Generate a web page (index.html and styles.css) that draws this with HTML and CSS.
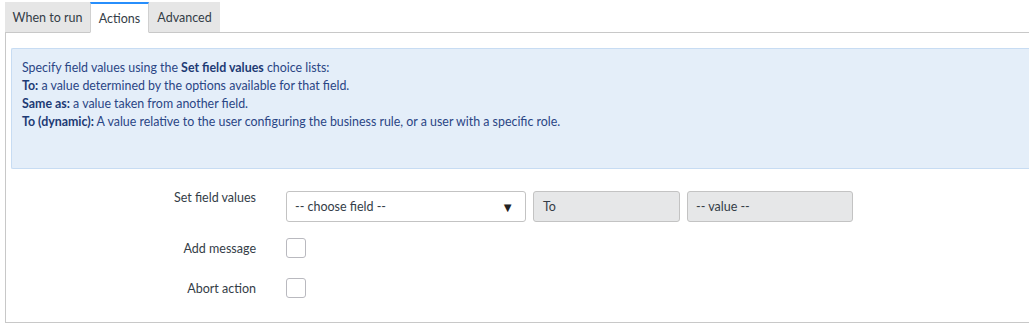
FILE: index.html
```html
<!DOCTYPE html>
<html>
<head>
<meta charset="utf-8">
<link rel="stylesheet" href="styles.css">
</head>
<body>
<div class="page">
  <div class="tabs">
    <div class="tab">When to run</div>
    <div class="tab active">Actions</div>
    <div class="tab">Advanced</div>
    <div class="tab-rest"></div>
  </div>
  <div class="panel">
    <div class="info">
      <div class="line">Specify field values using the <b>Set field values</b> choice lists:</div>
      <div class="line"><b>To:</b> a value determined by the options available for that field.</div>
      <div class="line"><b>Same as:</b> a value taken from another field.</div>
      <div class="line"><b>To (dynamic):</b> A value relative to the user configuring the business rule, or a user with a specific role.</div>
    </div>
    <div class="form">
      <div class="row row-fields">
        <div class="label">Set field values</div>
        <div class="controls">
          <div class="select"><span>-- choose field --</span><span class="arrow">&#9660;</span></div>
          <div class="box box-to">To</div>
          <div class="box box-value">-- value --</div>
        </div>
      </div>
      <div class="row">
        <div class="label">Add message</div>
        <div class="check"></div>
      </div>
      <div class="row">
        <div class="label">Abort action</div>
        <div class="check"></div>
      </div>
    </div>
  </div>
</div>
</body>
</html>
```

FILE: styles.css
```css
html, body {
  margin: 0;
  padding: 0;
  background: #fff;
}
body {
  font-family: Lato, "Liberation Sans", sans-serif;
  font-size: 12px;
  color: #343d47;
  width: 1029px;
  height: 327px;
  overflow: hidden;
}
.page {
  padding: 2px 0 0 5px;
}
.tabs {
  display: flex;
  height: 31px;
}
.tab {
  box-sizing: border-box;
  height: 31px;
  padding: 0;
  display: flex;
  align-items: center;
  justify-content: center;
  white-space: nowrap;
  background: #e6e6e6;
  border-bottom: 1px solid #c8c8c8;
  color: #343d47;
  font-size: 12.5px;
}
.tab:first-child { width: 85px; }
.tab:nth-child(2) { width: 59px; }
.tab:nth-child(3) { width: 71px; }
.tab.active {
  background: #fff;
  border-top: 2px solid #278efc;
  border-left: 1px solid #d0d0d0;
  border-right: 1px solid #d0d0d0;
  border-bottom: 1px solid #fff;
}
.tab-rest {
  flex: 1;
  border-bottom: 1px solid #c8c8c8;
}
.panel {
  border-left: 1px solid #c8c8c8;
  border-bottom: 1px solid #c8c8c8;
  height: 290px;
  box-sizing: border-box;
  padding-top: 15px;
}
.info {
  margin-left: 5px;
  box-sizing: border-box;
  height: 121px;
  background: #e4eef9;
  border: 1px solid #c7dcf3;
  border-right: none;
  border-radius: 2px 0 0 2px;
  padding: 10px 0 0 10px;
  color: #2a4585;
  font-size: 12.4px;
}
.info .line {
  line-height: 18px;
}
.info b {
  font-weight: 700;
  color: #1d3a74;
}
.form {
  padding-top: 22px;
}
.row {
  display: flex;
  align-items: flex-start;
  height: 40px;
}
.row-fields {
  height: 48px;
}
.label {
  width: 250px;
  text-align: right;
  color: #343d47;
  font-size: 12.5px;
  line-height: 20px;
}
.row-fields .label {
  line-height: 14px;
}
.controls {
  display: flex;
  gap: 7px;
  margin-left: 30px;
}
.select, .box {
  box-sizing: border-box;
  height: 31px;
  border: 1px solid #c3c3c3;
  border-radius: 3px;
  display: flex;
  align-items: center;
  font-size: 12.5px;
  color: #343d47;
}
.select {
  width: 240px;
  justify-content: space-between;
  padding: 0 11px 0 8px;
  background: #fff;
}
.arrow {
  font-size: 13px;
  color: #222;
}
.box {
  background: #e6e7e8;
  padding: 0 9px;
}
.box-to { width: 147px; }
.box-value { width: 166px; padding-left: 8px; }
.check {
  box-sizing: border-box;
  width: 20px;
  height: 20px;
  border: 1px solid #b9b9bf;
  border-radius: 3px;
  margin-left: 30px;
  margin-top: -1px;
  background: #fff;
}
```
